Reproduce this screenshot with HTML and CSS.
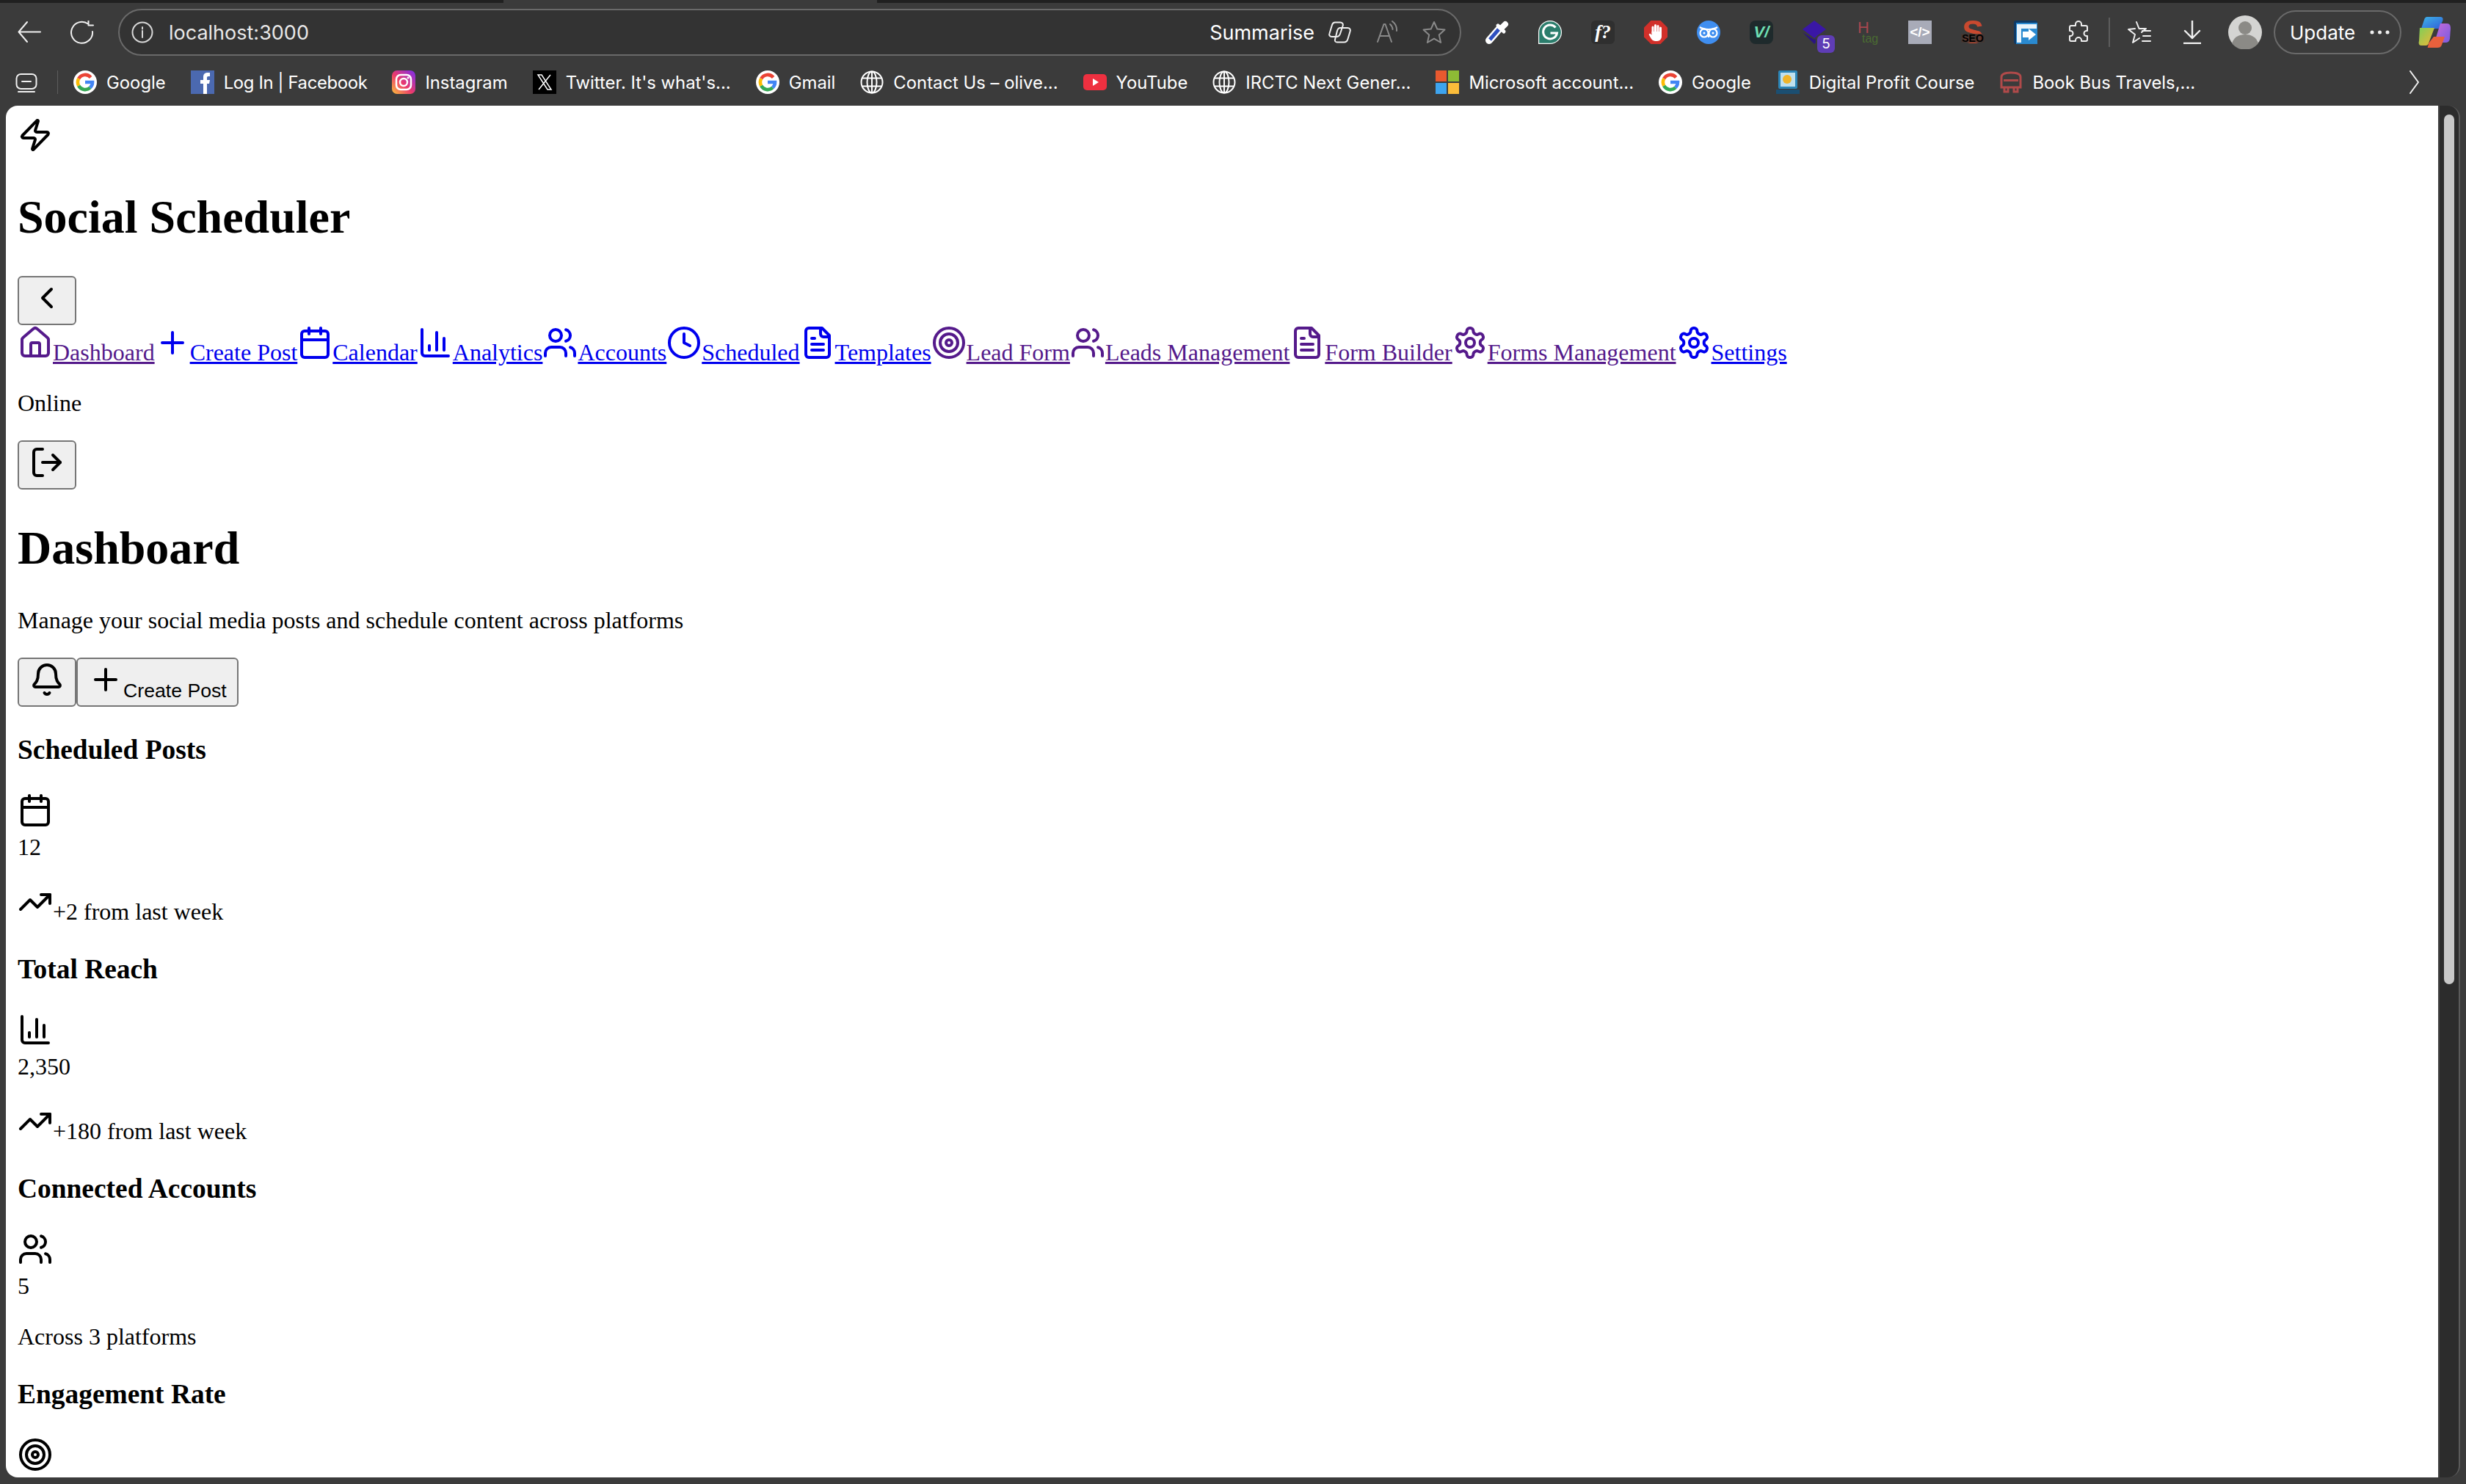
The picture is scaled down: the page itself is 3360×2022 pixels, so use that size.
FILE: index.html
```html
<!DOCTYPE html>
<html lang="en">
<head>
<meta charset="utf-8">
<title>Social Scheduler</title>
<link rel="stylesheet" href="styles.css">
</head>
<body>
<svg class="defs" aria-hidden="true">
  <defs>
    <symbol id="i-zap" viewBox="0 0 24 24"><path d="M4 14a1 1 0 0 1-.78-1.63l9.9-10.2a.5.5 0 0 1 .86.46l-1.92 6.02A1 1 0 0 0 13 10h7a1 1 0 0 1 .78 1.63l-9.9 10.2a.5.5 0 0 1-.86-.46l1.92-6.02A1 1 0 0 0 11 14z"/></symbol>
    <symbol id="i-chev" viewBox="0 0 24 24"><path d="m15 18-6-6 6-6"/></symbol>
    <symbol id="i-home" viewBox="0 0 24 24"><path d="M15 21v-8a1 1 0 0 0-1-1h-4a1 1 0 0 0-1 1v8"/><path d="M3 10a2 2 0 0 1 .709-1.528l7-5.999a2 2 0 0 1 2.582 0l7 5.999A2 2 0 0 1 21 10v9a2 2 0 0 1-2 2H5a2 2 0 0 1-2-2z"/></symbol>
    <symbol id="i-plus" viewBox="0 0 24 24"><path d="M5 12h14"/><path d="M12 5v14"/></symbol>
    <symbol id="i-cal" viewBox="0 0 24 24"><path d="M8 2v4"/><path d="M16 2v4"/><rect x="3" y="4" width="18" height="18" rx="2"/><path d="M3 10h18"/></symbol>
    <symbol id="i-chart" viewBox="0 0 24 24"><path d="M3 3v16a2 2 0 0 0 2 2h16"/><path d="M18 17V9"/><path d="M13 17V5"/><path d="M8 17v-3"/></symbol>
    <symbol id="i-users" viewBox="0 0 24 24"><path d="M16 21v-2a4 4 0 0 0-4-4H6a4 4 0 0 0-4 4v2"/><circle cx="9" cy="7" r="4"/><path d="M22 21v-2a4 4 0 0 0-3-3.87"/><path d="M16 3.13a4 4 0 0 1 0 7.75"/></symbol>
    <symbol id="i-clock" viewBox="0 0 24 24"><circle cx="12" cy="12" r="10"/><path d="M12 6v6l4 2"/></symbol>
    <symbol id="i-file" viewBox="0 0 24 24"><path d="M15 2H6a2 2 0 0 0-2 2v16a2 2 0 0 0 2 2h12a2 2 0 0 0 2-2V7Z"/><path d="M14 2v4a2 2 0 0 0 2 2h4"/><path d="M10 9H8"/><path d="M16 13H8"/><path d="M16 17H8"/></symbol>
    <symbol id="i-target" viewBox="0 0 24 24"><circle cx="12" cy="12" r="10"/><circle cx="12" cy="12" r="6"/><circle cx="12" cy="12" r="2"/></symbol>
    <symbol id="i-gear" viewBox="0 0 24 24"><path d="M12.22 2h-.44a2 2 0 0 0-2 2v.18a2 2 0 0 1-1 1.73l-.43.25a2 2 0 0 1-2 0l-.15-.08a2 2 0 0 0-2.73.73l-.22.38a2 2 0 0 0 .73 2.73l.15.1a2 2 0 0 1 1 1.72v.51a2 2 0 0 1-1 1.74l-.15.09a2 2 0 0 0-.73 2.73l.22.38a2 2 0 0 0 2.73.73l.15-.08a2 2 0 0 1 2 0l.43.25a2 2 0 0 1 1 1.73V20a2 2 0 0 0 2 2h.44a2 2 0 0 0 2-2v-.18a2 2 0 0 1 1-1.73l.43-.25a2 2 0 0 1 2 0l.15.08a2 2 0 0 0 2.73-.73l.22-.39a2 2 0 0 0-.73-2.73l-.15-.08a2 2 0 0 1-1-1.74v-.5a2 2 0 0 1 1-1.74l.15-.09a2 2 0 0 0 .73-2.73l-.22-.38a2 2 0 0 0-2.73-.73l-.15.08a2 2 0 0 1-2 0l-.43-.25a2 2 0 0 1-1-1.73V4a2 2 0 0 0-2-2z"/><circle cx="12" cy="12" r="3"/></symbol>
    <symbol id="i-logout" viewBox="0 0 24 24"><path d="M9 21H5a2 2 0 0 1-2-2V5a2 2 0 0 1 2-2h4"/><path d="m16 17 5-5-5-5"/><path d="M21 12H9"/></symbol>
    <symbol id="i-bell" viewBox="0 0 24 24"><path d="M10.268 21a2 2 0 0 0 3.464 0"/><path d="M3.262 15.326A1 1 0 0 0 4 17h16a1 1 0 0 0 .74-1.673C19.41 13.956 18 12.499 18 8A6 6 0 0 0 6 8c0 4.499-1.411 5.956-2.738 7.326"/></symbol>
    <symbol id="i-trend" viewBox="0 0 24 24"><path d="M22 7l-8.5 8.5-5-5L2 17"/><path d="M16 7h6v6"/></symbol>
    <symbol id="f-google" viewBox="0 0 32 32"><circle cx="16" cy="16" r="16" fill="#fff"/><path d="M23.6 9.4A10 10 0 0 0 7.2 11.2" fill="none" stroke="#ea4335" stroke-width="4.6"/><path d="M7.2 11.2a10 10 0 0 0 0 9.6" fill="none" stroke="#fbbc05" stroke-width="4.6"/><path d="M7.2 20.8a10 10 0 0 0 15.6 2.6" fill="none" stroke="#34a853" stroke-width="4.6"/><path d="M22.8 23.4A10 10 0 0 0 26 16H16" fill="none" stroke="#4285f4" stroke-width="4.6"/></symbol>
    <symbol id="f-globe" viewBox="0 0 32 32"><g fill="none" stroke="#fff" stroke-width="2"><circle cx="16" cy="16" r="14.5"/><ellipse cx="16" cy="16" rx="6.5" ry="14.5"/><path d="M16 1.5v29M2.5 10.5h27M2.5 21.5h27"/></g></symbol>
  </defs>
</svg>

<div class="browser">
  <div class="tabstrip"><div class="tab-gap"></div><div class="tab-active"></div></div>

  <div class="toolbar">
    <div class="slot"><svg class="ch-icon" viewBox="0 0 32 32"><path d="M31 15.500H2M13 2 1.500 15.500 13 29"/></svg></div>
    <div class="slot"><svg class="ch-icon" viewBox="0 0 32 32"><path d="M30 15a14.500 14.500 0 1 1-6-10.500M24.500 0v6.500H31"/></svg></div>
    <div class="omnibox">
      <svg class="ch-icon ch-info" viewBox="0 0 30 30"><circle cx="15" cy="15" r="13.500"/><path d="M15 13v9M15 8v2.500"/></svg>
      <span class="url">localhost:3000</span>
      <span class="summarise">Summarise</span>
      <svg class="ch-icon ch-copilot" viewBox="0 0 32 30"><path d="M9 1.500h7c3 0 4.500 2 3.500 5L16 17c-.8 2.500-2.500 4-5 4H4.500c-2.500 0-4-2-3-4.500L5 5c.7-2.200 2-3.500 4-3.500z"/><path d="M16 9h10c3 0 4.500 2 3.500 5l-3 10c-.8 2.700-2.500 4.500-5 4.500H12c-2.500 0-3.500-1.500-3-3.500L12 13c.7-2.500 2-4 4-4z"/></svg>
      <svg class="ch-icon ch-read" viewBox="0 0 30 32"><path d="M1 29 9.500 5h2L20 29M4.500 21h12"/><path d="M18 5a10 10 0 0 1 3.500 7M21 1a15 15 0 0 1 6 13"/></svg>
      <svg class="ch-icon ch-star" viewBox="0 0 32 32"><path d="M16 2l4.300 9.600 10.200 1-7.700 7 2.300 10.400-9.100-5.400-9.100 5.400 2.300-10.400-7.700-7 10.200-1z"/></svg>
    </div>
    <div class="ext-row">
      <div class="slot"><svg class="ext" viewBox="0 0 32 32"><path d="M5 27 19 11" stroke="#fff" stroke-width="10" stroke-linecap="round"/><path d="M6 26 18 12" stroke="#2e4fc0" stroke-width="5"/><path d="M17 7l8 8" stroke="#fff" stroke-width="5" stroke-linecap="round"/><path d="M23 9l4-4" stroke="#fff" stroke-width="8" stroke-linecap="round"/></svg></div>
      <div class="slot"><svg class="ext" viewBox="0 0 32 32"><path d="M16 .6a15.400 15.400 0 1 1 0 30.800H.6V16A15.400 15.400 0 0 1 16 .6z" fill="#2b7d6c" stroke="#fff" stroke-width="1.200"/><path d="M23.500 9.500a9.500 9.500 0 1 0 2 7.500H16.500" fill="none" stroke="#fff" stroke-width="3"/></svg></div>
      <div class="slot"><div class="ext-tile ext-f">f?</div></div>
      <div class="slot"><svg class="ext" viewBox="0 0 32 32"><path d="M9.500 0h13L32 9.500v13L22.500 32h-13L0 22.500v-13z" fill="#d1302a"/><path d="M12 17V9M15.500 17V6.500M19 17V7.500M22.500 18v-8" stroke="#fff" stroke-width="3" stroke-linecap="round"/><path d="M10.500 15h13.500v7a6 6 0 0 1-6 6h-3a6 6 0 0 1-5-3l-3.500-6 1.500-1.500 2.500 2z" fill="#fff"/></svg></div>
      <div class="slot"><svg class="ext" viewBox="0 0 32 32"><circle cx="16" cy="16" r="16" fill="#3f8ef0"/><g fill="none" stroke="#fff" stroke-width="2.200"><circle cx="10" cy="17" r="5.500"/><circle cx="22" cy="17" r="5.500"/><path d="M4 9c3 2 7 3 12 3s9-1 12-3M16 20v3"/></g><circle cx="10" cy="17" r="1.500" fill="#fff"/><circle cx="22" cy="17" r="1.500" fill="#fff"/></svg></div>
      <div class="slot"><div class="ext-tile ext-v">V/</div></div>
      <div class="slot"><div class="ext-stack"><svg class="ext" viewBox="0 0 32 32"><path d="M0 16l16 16 16-16-16 10z" fill="#2a1480"/><path d="M16 0 32 12 16 24 0 12z" fill="#3a17a6"/></svg><span class="ext-badge">5</span></div></div>
      <div class="slot"><div class="ext-htag"><span class="ext-h">H</span><span class="ext-tag">tag</span></div></div>
      <div class="slot"><div class="ext-tile ext-code">&lt;/&gt;</div></div>
      <div class="slot"><div class="ext-seo"><span class="ext-s">S</span><span class="ext-seo-text">SEO</span></div></div>
      <div class="slot"><svg class="ext" viewBox="0 0 32 32"><rect width="32" height="32" rx="3" fill="#0e3a66"/><rect x="3" y="3" width="29" height="29" fill="#2a8ad0"/><path d="M4 30V5h27v6H10v19z" fill="#eaf4fb"/><path d="M12 15h8v-4l10 8-10 8v-4h-8z" fill="#fff"/></svg></div>
      <div class="slot"><svg class="ch-icon ch-puzzle" viewBox="0 0 28 32"><path d="M10 5a4 4 0 0 1 8 0v2h6a2 2 0 0 1 2 2v5h-1a3.500 3.500 0 0 0 0 7h1v5a2 2 0 0 1-2 2h-6v-1a4 4 0 0 0-8 0v1H4a2 2 0 0 1-2-2v-5h1a3.500 3.500 0 0 0 0-7H2V9a2 2 0 0 1 2-2h6z"/></svg></div>
    </div>
    <div class="tool-divider"></div>
    <div class="slot"><svg class="ch-icon ch-favs" viewBox="0 0 34 32"><path d="M13 2l3.500 9H26l-6 5M22 21h10M21 14h11M21 28h11M17 24l-9 6 3-11-9-7 9-1"/></svg></div>
    <div class="slot"><svg class="ch-icon ch-down" viewBox="0 0 24 32"><path d="M12 0v24M2 14l10 10 10-10M0 31h24"/></svg></div>
    <div class="slot"><svg class="avatar" viewBox="0 0 46 46"><circle cx="23" cy="23" r="23" fill="#d4d4d2"/><circle cx="23" cy="17" r="9" fill="#8b8a86"/><path d="M5 38c3-9 10-12 18-12s15 3 18 12a23 23 0 0 1-36 0z" fill="#8b8a86"/></svg></div>
    <div class="update"><span>Update</span><svg class="update-dots" viewBox="0 0 27 6"><circle cx="3" cy="3" r="2.500"/><circle cx="13.500" cy="3" r="2.500"/><circle cx="24" cy="3" r="2.500"/></svg></div>
    <div class="slot slot-last"><svg class="copilot" viewBox="0 0 44 42"><defs><linearGradient id="cg1" x1="0" y1="0" x2="1" y2="1"><stop offset="0" stop-color="#3fb4e8"/><stop offset="1" stop-color="#2f5fd8"/></linearGradient><linearGradient id="cg2" x1="0" y1="0" x2="1" y2="1"><stop offset="0" stop-color="#c86bd8"/><stop offset="1" stop-color="#7a5be0"/></linearGradient><linearGradient id="cg3" x1="0" y1="0" x2="1" y2="1"><stop offset="0" stop-color="#7fcf58"/><stop offset="1" stop-color="#f2b636"/></linearGradient></defs><path d="M12 0h18c4 0 4 3 3 6l-5 10H4l4-12c1-3 2-4 4-4z" fill="url(#cg1)"/><path d="M2 15h20l-8 21c-1 3-3 3-5 3H4c-3 0-4-3-3-6z" fill="url(#cg3)"/><path d="M30 9h9c4 0 5 3 5 7l-1 14c-1 4-3 5-6 5H22z" fill="url(#cg2)"/><path d="M14 36l7-9h15l-4 11c-1 3-3 4-6 4H13c-1 0 1-3 1-6z" fill="#e8603c"/></svg></div>
  </div>

  <div class="bookmarks">
    <svg class="ch-icon tabs-icon" viewBox="0 0 30 32"><rect x="1.500" y="5" width="27" height="20" rx="6"/><path d="M9 15h12M4 29h22"/></svg>
    <div class="bm-divider"></div>
    <div class="bm"><svg class="fav"><use href="#f-google"/></svg><span>Google</span></div>
    <div class="bm"><svg class="fav" viewBox="0 0 32 32"><rect width="32" height="32" fill="#4b69b0"/><path d="M17 32V18h-4v-5h4V9c0-4 2-6 6-6h3v5h-2c-2 0-2 1-2 2v3h4l-1 5h-3v14z" fill="#fff"/></svg><span class="bm-tight">Log In | Facebook</span></div>
    <div class="bm"><svg class="fav" viewBox="0 0 32 32"><defs><linearGradient id="ig" x1="0" y1="1" x2="1" y2="0"><stop offset="0" stop-color="#fdc33c"/><stop offset=".45" stop-color="#ec3a6b"/><stop offset="1" stop-color="#7a2ef0"/></linearGradient></defs><rect width="32" height="32" rx="7" fill="url(#ig)"/><g fill="none" stroke="#fff" stroke-width="2.500"><rect x="6" y="6" width="20" height="20" rx="6"/><circle cx="16" cy="16" r="5"/></g><circle cx="22" cy="10" r="1.500" fill="#fff"/></svg><span>Instagram</span></div>
    <div class="bm"><svg class="fav" viewBox="0 0 32 32"><rect width="32" height="32" fill="#000"/><path d="M7 6h5l13 20h-5zM24 6 8 26" fill="none" stroke="#fff" stroke-width="1.500"/></svg><span>Twitter. It's what's...</span></div>
    <div class="bm"><svg class="fav"><use href="#f-google"/></svg><span>Gmail</span></div>
    <div class="bm"><svg class="fav"><use href="#f-globe"/></svg><span>Contact Us – olive...</span></div>
    <div class="bm"><svg class="fav" viewBox="0 0 32 32"><rect y="5" width="32" height="22" rx="5" fill="#ee3040"/><path d="M13 11l8 5-8 5z" fill="#fff"/></svg><span>YouTube</span></div>
    <div class="bm"><svg class="fav"><use href="#f-globe"/></svg><span>IRCTC Next Gener...</span></div>
    <div class="bm"><svg class="fav" viewBox="0 0 32 32"><rect width="15" height="15" fill="#e8592f"/><rect x="17" width="15" height="15" fill="#8dbb35"/><rect y="17" width="15" height="15" fill="#3ea4ee"/><rect x="17" y="17" width="15" height="15" fill="#fbbc3a"/></svg><span>Microsoft account...</span></div>
    <div class="bm"><svg class="fav"><use href="#f-google"/></svg><span>Google</span></div>
    <div class="bm"><svg class="fav" viewBox="0 0 32 32"><rect x="3" width="26" height="25" rx="2" fill="#2c86b8"/><rect x="6" y="3" width="20" height="19" fill="#bfe0ee"/><circle cx="15" cy="12" r="6" fill="#f0b429"/><rect y="26" width="32" height="6" fill="#1b4f72"/></svg><span>Digital Profit Course</span></div>
    <div class="bm"><svg class="fav" viewBox="0 0 32 32"><g fill="none" stroke="#b04a4a" stroke-width="3"><path d="M3 9c0-4 4-6 13-6s13 2 13 6v14H3zM7 23v6h5v-6M20 23v6h5v-6"/></g><path d="M6 12h20v3H6z" fill="#b04a4a"/></svg><span>Book Bus Travels,...</span></div>
    <svg class="ch-icon bm-more" viewBox="0 0 14 32"><path d="M1 1l11 15L1 31"/></svg>
  </div>

  <div class="viewport">
    <main class="page">
      <div><svg class="icon"><use href="#i-zap"/></svg></div>
      <h1>Social Scheduler</h1>
      <button class="btn" type="button"><svg class="icon"><use href="#i-chev"/></svg></button>
      <nav><a class="visited" href="#"><svg class="icon"><use href="#i-home"/></svg><span>Dashboard</span></a><a href="#"><svg class="icon"><use href="#i-plus"/></svg><span>Create Post</span></a><a href="#"><svg class="icon"><use href="#i-cal"/></svg><span>Calendar</span></a><a href="#"><svg class="icon"><use href="#i-chart"/></svg><span>Analytics</span></a><a href="#"><svg class="icon"><use href="#i-users"/></svg><span>Accounts</span></a><a href="#"><svg class="icon"><use href="#i-clock"/></svg><span>Scheduled</span></a><a href="#"><svg class="icon"><use href="#i-file"/></svg><span>Templates</span></a><a class="visited" href="#"><svg class="icon"><use href="#i-target"/></svg><span>Lead Form</span></a><a class="visited" href="#"><svg class="icon"><use href="#i-users"/></svg><span>Leads Management</span></a><a class="visited" href="#"><svg class="icon"><use href="#i-file"/></svg><span>Form Builder</span></a><a class="visited" href="#"><svg class="icon"><use href="#i-gear"/></svg><span>Forms Management</span></a><a href="#"><svg class="icon"><use href="#i-gear"/></svg><span>Settings</span></a></nav>
      <p>Online</p>
      <button class="btn" type="button"><svg class="icon"><use href="#i-logout"/></svg></button>
      <h1>Dashboard</h1>
      <p>Manage your social media posts and schedule content across platforms</p>
      <div><button class="btn" type="button"><svg class="icon"><use href="#i-bell"/></svg></button><button class="btn" type="button"><svg class="icon"><use href="#i-plus"/></svg>Create Post</button></div>
      <h3>Scheduled Posts</h3>
      <div><svg class="icon"><use href="#i-cal"/></svg></div>
      <div>12</div>
      <p><svg class="icon"><use href="#i-trend"/></svg>+2 from last week</p>
      <h3>Total Reach</h3>
      <div><svg class="icon"><use href="#i-chart"/></svg></div>
      <div>2,350</div>
      <p><svg class="icon"><use href="#i-trend"/></svg>+180 from last week</p>
      <h3>Connected Accounts</h3>
      <div><svg class="icon"><use href="#i-users"/></svg></div>
      <div>5</div>
      <p>Across 3 platforms</p>
      <h3>Engagement Rate</h3>
      <div><svg class="icon"><use href="#i-target"/></svg></div>
    </main>
    <div class="scrollbar"><div class="thumb"></div></div>
  </div>
</div>
</body>
</html>
```

FILE: styles.css
```css
* { box-sizing: border-box; }
html, body { margin: 0; padding: 0; height: 2022px; overflow: hidden; }
.defs { position: absolute; width: 0; height: 0; }

.browser {
  display: flex;
  flex-direction: column;
  height: 2022px;
  background: #3b3b3b;
  font-family: Inter, "Liberation Sans", sans-serif;
  color: #fff;
}

.tabstrip { display: flex; height: 4px; flex: none; background: #202020; }
.tab-gap { width: 686px; }
.tab-active { width: 509px; background: #3b3b3b; }

.toolbar { display: flex; align-items: center; height: 80px; flex: none; padding-left: 4px; }
.slot { width: 72px; height: 64px; flex: none; display: flex; align-items: center; justify-content: center; }
.slot-last { margin-left: 9px; }

.ch-icon { width: 32px; height: 32px; fill: none; stroke: #f0f0f0; stroke-width: 2; stroke-linecap: round; stroke-linejoin: round; flex: none; }

.omnibox {
  display: flex;
  align-items: center;
  width: 1830px;
  height: 64px;
  margin: 0 13px;
  padding-left: 16px;
  background: #333;
  border: 2px solid #6a6a6a;
  border-radius: 32px;
  flex: none;
}
.ch-info { width: 30px; height: 30px; stroke: #d8d8d8; margin-right: 21px; }
.url { font-size: 27px; color: #e8e8e8; }
.summarise { font-size: 27px; margin-left: auto; margin-right: 19px; }
.ch-copilot { width: 32px; margin-right: 34px; }
.ch-read { width: 30px; stroke: #8a8a8a; margin-right: 32px; }
.ch-star { stroke: #8a8a8a; margin-right: 19px; }

.ext-row { display: flex; flex: none; }
.ext { width: 32px; height: 32px; display: block; }
.ext-tile {
  width: 32px; height: 32px;
  display: flex; align-items: center; justify-content: center;
  border-radius: 6px;
}
.ext-f { background: #2f2f2f; font: italic bold 26px "Liberation Serif", serif; }
.ext-v { background: #1e2a2c; border-radius: 8px; color: #6fe0b4; font: italic bold 22px "Liberation Sans", sans-serif; }
.ext-code { background: #a8abb8; border-radius: 0; font: bold 19px "Liberation Sans", sans-serif; }

.ext-stack { position: relative; width: 32px; height: 32px; }
.ext-badge {
  position: absolute; right: -12px; bottom: -12px;
  width: 24px; height: 24px;
  border-radius: 6px;
  background: #5f3db5;
  box-shadow: 0 0 0 2px #3b3b3b;
  font-size: 19px; line-height: 24px; text-align: center;
}
.ext-htag { width: 30px; display: flex; flex-direction: column; font-family: "Liberation Sans", sans-serif; }
.ext-h { color: #a8474f; font-size: 22px; line-height: 17px; padding-left: 2px; }
.ext-tag { color: #4a6b32; font-size: 16px; line-height: 14px; padding-left: 8px; }
.ext-seo { position: relative; width: 32px; height: 32px; text-align: center; font-family: "Liberation Sans", sans-serif; }
.ext-s { color: #c9492f; font-size: 44px; font-weight: 700; line-height: 32px; }
.ext-seo-text { position: absolute; left: 0; top: 18px; width: 32px; background: rgba(70, 55, 50, .8); font-size: 14px; font-weight: 700; line-height: 12px; color: #000; }
.ch-puzzle { width: 28px; }

.tool-divider { width: 2px; height: 40px; margin: 0 4px 0 5px; background: #5d5d5d; flex: none; }
.ch-favs { width: 34px; }
.ch-down { width: 24px; stroke-width: 2.4; }
.avatar { width: 46px; height: 46px; display: block; }

.update {
  display: flex; align-items: center; justify-content: space-between;
  width: 174px; height: 60px;
  margin-left: 3px;
  padding: 0 14px 0 20px;
  border: 2px solid #6a6a6a;
  border-radius: 30px;
  font-size: 26px;
  flex: none;
}
.update-dots { width: 27px; height: 6px; fill: #f0f0f0; }
.copilot { width: 44px; height: 42px; display: block; }

.bookmarks { display: flex; align-items: center; height: 56px; margin-bottom: 4px; padding-left: 21px; flex: none; }
.tabs-icon { width: 30px; }
.bm-divider { width: 1px; height: 32px; margin: 0 21px 0 27px; background: #5d5d5d; flex: none; }
.bm { display: flex; align-items: center; gap: 13px; margin-right: 34px; font-size: 23.85px; white-space: nowrap; flex: none; }
.bm-tight { letter-spacing: -.35px; }
.fav { width: 32px; height: 32px; flex: none; }
.bm-more { width: 14px; margin-left: auto; margin-right: 63px; }

.viewport { display: flex; height: 1869px; flex: none; padding-left: 8px; }
.page {
  width: 3314px;
  height: 1869px;
  flex: none;
  padding: 16px 16px 0;
  overflow: hidden;
  background: #fff;
  border-radius: 16px 0 0 16px;
  color: #000;
  font-family: "Liberation Serif", serif;
  font-size: 32px;
}
.page h1 { font-size: 64px; margin: 42.88px 0; }
.page h3 { font-size: 37.44px; margin: 37.44px 0; }
.page p { margin: 32px 0; }

.icon { width: 48px; height: 48px; fill: none; stroke: currentColor; stroke-width: 2; stroke-linecap: round; stroke-linejoin: round; }

.btn {
  padding: 4px 14px;
  background: #efefef;
  border: 2px solid #767676;
  border-radius: 6px;
  color: #000;
  font-family: "Liberation Sans", sans-serif;
  font-size: 26.67px;
}

nav a { color: #0000ee; text-decoration: none; }
nav a.visited { color: #551a8b; }
nav a span { text-decoration: underline; }

.scrollbar {
  width: 30px;
  height: 1869px;
  flex: none;
  padding: 12px 6px 0 6px;
  background: #2c2c2c;
  border-left: 2px solid #444;
  border-right: 2px solid #5a5a5a;
  border-radius: 0 16px 16px 0;
}
.thumb { width: 14px; height: 1185px; background: #c8c8c8; border-radius: 7px; }
```
